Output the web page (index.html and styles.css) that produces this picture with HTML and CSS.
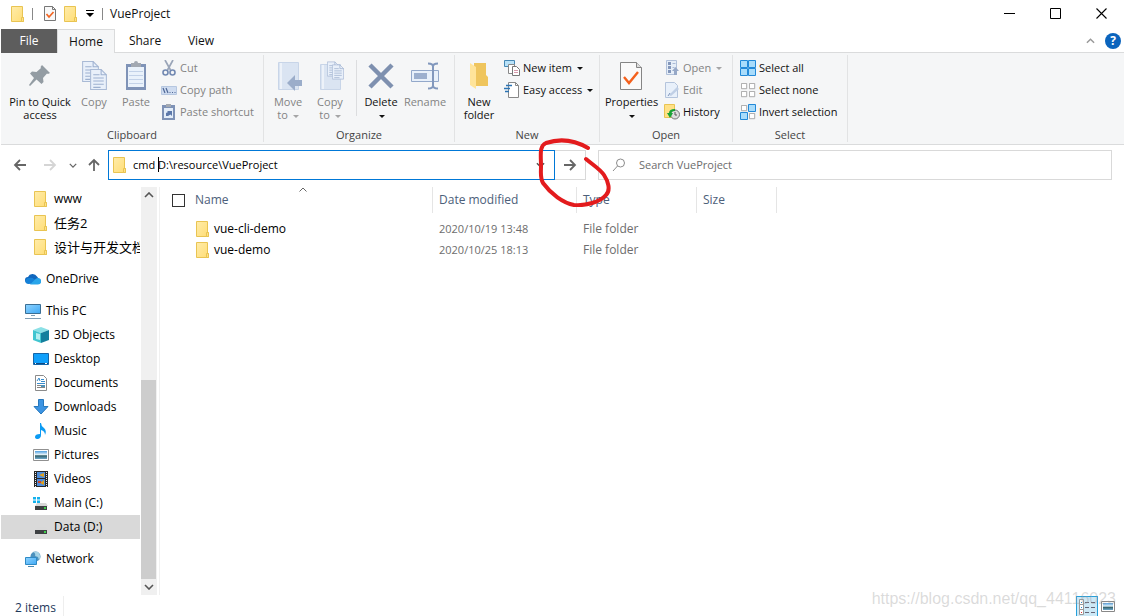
FILE: index.html
```
<!DOCTYPE html>
<html lang="en">
<head>
<meta charset="utf-8">
<title>VueProject</title>
<link rel="stylesheet" href="styles.css">
</head>
<body>
<svg class="defs" aria-hidden="true">
  <defs>
    <linearGradient id="paper" x1="0" y1="0" x2="1" y2="1"><stop offset="0" stop-color="#ffecaa"/><stop offset="1" stop-color="#ffdd75"/></linearGradient>
    <linearGradient id="screen" x1="0" y1="0" x2="1" y2="1"><stop offset="0" stop-color="#8fd3ff"/><stop offset="1" stop-color="#3fa9f5"/></linearGradient>
    <linearGradient id="picture" x1="0" y1="0" x2="0" y2="1"><stop offset="0" stop-color="#4d9ee0"/><stop offset=".45" stop-color="#e4f2f8"/><stop offset=".6" stop-color="#31606a"/><stop offset="1" stop-color="#6fa9cc"/></linearGradient>
  </defs>
  <symbol id="folder" viewBox="0 0 14 16"><path d="M.5.5h11v11h1v4H.5z" fill="url(#paper)" stroke="#e9c452"/><path d="M10.500 15.500v-4h2v4z" fill="#ffe187" stroke="#e9c452"/></symbol>
  <symbol id="chev-down" viewBox="0 0 10 6"><path d="M1 1l4 4 4-4" fill="none" stroke="currentColor" stroke-width="1.6"/></symbol>
  <symbol id="chev-up" viewBox="0 0 10 6"><path d="M1 5l4-4 4 4" fill="none" stroke="currentColor" stroke-width="1.6"/></symbol>
  <symbol id="arrow" viewBox="0 0 14 12"><path d="M1 6h11M7 1l5 5-5 5" fill="none" stroke="currentColor" stroke-width="1.800"/></symbol>
  <symbol id="sheet" viewBox="0 0 16 20"><path d="M.5.5h10l5 5v14H.5z" fill="#e9f0fa" stroke="#a9bad5"/><path d="M10.500.5v5h5M3 5.500h6M3 8.500h10M3 11.500h10M3 14.500h10M3 17.500h7" fill="none" stroke="#9db0cf"/></symbol>
  <symbol id="drive" viewBox="0 0 16 16"><path d="M4 8h9l2 3H2z" fill="#d8d8d8"/><path d="M2 11h12v4H2z" fill="#3e4143"/><path d="M11 13h2" stroke="#3dff4a" stroke-width="1.500"/></symbol>
  <symbol id="cell" viewBox="0 0 8 8"><path d="M.5.5h6v6h-6z" fill="#fff" stroke="#a0a0a0"/></symbol>
  <symbol id="cell-on" viewBox="0 0 8 8"><path d="M.5.5h7v7h-7z" fill="#a9dcfb" stroke="#2389d8"/></symbol>
</svg>

<header class="titlebar">
  <svg class="i-folder"><use href="#folder"/></svg>
  <span class="bar"></span>
  <button class="qa" aria-label="Properties"><svg width="12" height="15" viewBox="0 0 12 15"><path d="M.5.5h8l3 3v11H.5z" fill="#f8f8f8" stroke="#777"/><path d="M8.500.5v3h3" fill="none" stroke="#777"/><path d="M2.500 8l2.500 3 4.500-5" fill="none" stroke="#f26522" stroke-width="1.700"/></svg></button>
  <button class="qa" aria-label="New folder"><svg class="i-folder"><use href="#folder"/></svg></button>
  <button class="qa" aria-label="Customize toolbar"><svg width="8" height="7" viewBox="0 0 8 7"><path d="M0 .5h8" stroke="#000"/><path d="M0 3h8L4 7z"/></svg></button>
  <span class="bar"></span>
  <h1 class="title">VueProject</h1>
  <div class="window-buttons">
    <button aria-label="Minimize"><svg width="11" height="11" viewBox="0 0 11 11"><path d="M0 5.500h11" stroke="#000"/></svg></button>
    <button aria-label="Maximize"><svg width="11" height="11" viewBox="0 0 11 11"><path d="M.5.5h10v10H.5z" fill="none" stroke="#000"/></svg></button>
    <button aria-label="Close"><svg width="11" height="11" viewBox="0 0 11 11"><path d="M.5.5l10 10M10.500.5l-10 10" stroke="#000" stroke-width="1.100"/></svg></button>
  </div>
</header>

<nav class="tabs">
  <button class="tab file">File</button>
  <button class="tab active">Home</button>
  <button class="tab share">Share</button>
  <button class="tab">View</button>
  <div class="tab-tools">
    <button aria-label="Collapse ribbon" class="collapse"><svg width="9" height="6"><use href="#chev-up"/></svg></button>
    <button class="help" aria-label="Help">?</button>
  </div>
</nav>

<section class="ribbon">
  <div class="group clipboard">
    <div class="tools">
      <button class="big w66"><span class="pic"><svg width="24" height="24" viewBox="0 0 24 24"><path d="M14 1l8 8-2 1-1-.5-4 4.500.5 4-2 2-5-4.500L2 22l-1-1 5-7-4-4.500 2-2 4.500.5 4.500-4L12.500 3z" fill="#939ca3"/></svg></span>Pin to Quick<br>access</button>
      <button class="big w42 off"><span class="pic"><svg width="26" height="30" viewBox="0 0 26 30"><use href="#sheet" x="1" y="0" width="17" height="21"/><use href="#sheet" x="9" y="8" width="17" height="21"/></svg></span>Copy</button>
      <button class="big w42 off"><span class="pic"><svg width="20" height="30" viewBox="0 0 20 30"><path d="M0 3h20v26H0z" fill="#7f93b7"/><path d="M2 6h16v20H2z" fill="#eaf2fb"/><path d="M3 10.500h14M3 14.500h14M3 18.500h14M3 22.500h14" stroke="#c3d2e8"/><path d="M5 2h3a2 2 0 0 1 4 0h3v4H5z" fill="#a3a9b2"/></svg></span>Paste</button>
      <div class="stack">
        <button class="small off"><svg class="i16" viewBox="0 0 16 16"><path d="M4 0l5.500 10M12 0L6.500 10" stroke="#9aa5b8" stroke-width="1.700"/><circle cx="4.500" cy="12.500" r="2.500" fill="none" stroke="#7289b2" stroke-width="1.600"/><circle cx="11.500" cy="12.500" r="2.500" fill="none" stroke="#7289b2" stroke-width="1.600"/></svg>Cut</button>
        <button class="small off"><svg class="i16" viewBox="0 0 16 16"><path d="M.5 4.500h15v8H.5z" fill="#cfdcf0" stroke="#b6c7e0"/><path d="M2 6l2 5M5 6l2 5M8.500 10.500h1M11 10.500h1M13.500 10.500h1" stroke="#4e6796" stroke-width="1.200"/></svg>Copy path</button>
        <button class="small off"><svg class="i16" viewBox="0 0 16 16"><path d="M1 1h13v15H1z" fill="#7e92b6"/><path d="M3 4h9v10H3z" fill="#e3edf9"/><path d="M5 0h5v3H5z" fill="#a3a9b2"/><path d="M5 12V9l2-1-1-1h5v5L9.500 10.500 7 12z" fill="#5c78aa"/></svg>Paste shortcut</button>
      </div>
    </div>
    <h2>Clipboard</h2>
  </div>

  <div class="group organize">
    <div class="tools">
      <button class="big w42 off"><span class="pic"><svg width="28" height="30" viewBox="0 0 28 30"><path d="M4.500 1.500h20v27h-20z" fill="#dae4f2" stroke="#c8d5e8"/><path d="M7 2v26" stroke="#edf2f9" stroke-width="2"/><path d="M13 22l8-8v5h7v6h-7v5z" fill="#9badca"/></svg></span>Move<br>to <i class="drop"></i></button>
      <button class="big w42 off"><span class="pic"><svg width="28" height="32" viewBox="0 0 28 32"><path d="M4.500 4.500h20v25h-20z" fill="#dae4f2" stroke="#c8d5e8"/><path d="M7 5v24" stroke="#edf2f9" stroke-width="2"/><use href="#sheet" x="11" y="1" width="12" height="16"/><use href="#sheet" x="16" y="4" width="12" height="16"/></svg></span>Copy<br>to <i class="drop"></i></button>
      <span class="rule"></span>
      <button class="big w42"><span class="pic"><svg width="26" height="26" viewBox="0 0 26 26"><path d="M2 2l22 22M24 2L2 24" stroke="#7e90af" stroke-width="4.500"/></svg></span>Delete<br><i class="drop"></i></button>
      <button class="big w46 off"><span class="pic"><svg width="28" height="28" viewBox="0 0 28 28"><path d="M.5 8.500h27v11H.5z" fill="#e8f0fa" stroke="#93a8ca"/><path d="M3 11h13v6H3z" fill="#9cafce"/><path d="M17 1.500q5 0 5 3 0-3 5-3M17 26.500q5 0 5-3 0 3 5 3M22 4v20" fill="none" stroke="#8298bd" stroke-width="2"/></svg></span>Rename</button>
    </div>
    <h2>Organize</h2>
  </div>

  <div class="group new">
    <div class="tools">
      <button class="big w42"><span class="pic"><svg width="20" height="28" viewBox="0 0 20 28"><path d="M5 1h12v12l2 2v9H5z" fill="#efc55d"/><path d="M1 1l6 4v22l-6-4z" fill="#ffe49a"/></svg></span>New<br>folder</button>
      <div class="stack">
        <button class="small"><svg class="i16" viewBox="0 0 16 16"><path d="M.5.5h10v6H.5z" fill="#b9e2f8" stroke="#4688b5"/><path d="M4.500 4.500h6v9h-6z" fill="#fff" stroke="#888"/><path d="M8.500 6.500h4l3 3v6h-7z" fill="#fff" stroke="#777"/><path d="M10 10.500h4M10 12.500h4" stroke="#d79aab"/></svg>New item <i class="drop"></i></button>
        <button class="small"><svg class="i16" viewBox="0 0 16 16"><path d="M4.500.5h7l3 3v12h-10z" fill="#fff" stroke="#888"/><path d="M11.500.5v3h3" fill="none" stroke="#888"/><path d="M2 3.500h6M0 6.500h6M1 9.500h4" stroke="#2b73b3" stroke-width="1.300"/></svg>Easy access <i class="drop"></i></button>
      </div>
    </div>
    <h2>New</h2>
  </div>

  <div class="group open">
    <div class="tools">
      <button class="big w52"><span class="pic"><svg width="22" height="28" viewBox="0 0 22 28"><path d="M.5.5h16l5 5v22H.5z" fill="#fafafa" stroke="#858585"/><path d="M16.500.5v5h5" fill="#ddd" stroke="#858585"/><path d="M4 15l5 6 9-11" fill="none" stroke="#f4611d" stroke-width="2.400"/></svg></span>Properties<br><i class="drop"></i></button>
      <div class="stack">
        <button class="small off"><svg class="i16" viewBox="0 0 16 16"><path d="M2.500.5h10v14h-10z" fill="#e6eef8" stroke="#b1c1da"/><path d="M4 2h3v3H4zM4 6h3v3H4zM4 10h3v3H4z" fill="#8397bb"/><path d="M8.500 3.500h3M8.500 7.500h2" stroke="#a9bad5"/><path d="M8 11l3.500-4 3.500 4h-2v4h-3v-4z" fill="#96a8c7"/></svg>Open <i class="drop"></i></button>
        <button class="small off"><svg class="i16" viewBox="0 0 16 16"><path d="M1.500.5h9l3 3v12h-12z" fill="#e8f0fa" stroke="#b4c4dc"/><path d="M5 13l8-8 2 2-8 7z" fill="#c0cfe5"/><path d="M4 14l2-3" stroke="#8196bb"/></svg>Edit</button>
        <button class="small"><svg class="i16" viewBox="0 0 16 16"><path d="M.5.5h10v13H.5z" fill="#ffe187" stroke="#e9c452"/><circle cx="11" cy="10.500" r="4.500" fill="#ddd" stroke="#777"/><path d="M11 8v3h2" fill="none" stroke="#555"/><path d="M11 5Q5 5 5 9H3l3 5 3-5H7.500q0-2 3.500-2z" fill="#18a335"/></svg>History</button>
      </div>
    </div>
    <h2>Open</h2>
  </div>

  <div class="group select">
    <div class="tools">
      <div class="stack">
        <button class="small"><svg class="i16" viewBox="0 0 16 16"><use href="#cell-on" width="8" height="8"/><use href="#cell-on" x="8" width="8" height="8"/><use href="#cell-on" y="8" width="8" height="8"/><use href="#cell-on" x="8" y="8" width="8" height="8"/></svg>Select all</button>
        <button class="small"><svg class="i16" viewBox="0 0 16 16"><use href="#cell" x="1" y="1" width="7" height="7"/><use href="#cell" x="9" y="1" width="7" height="7"/><use href="#cell" x="1" y="9" width="7" height="7"/><use href="#cell" x="9" y="9" width="7" height="7"/></svg>Select none</button>
        <button class="small"><svg class="i16" viewBox="0 0 16 16"><use href="#cell" x="1" y="1" width="7" height="7"/><use href="#cell-on" x="8" width="8" height="8"/><use href="#cell-on" y="8" width="8" height="8"/><use href="#cell" x="9" y="9" width="7" height="7"/></svg>Invert selection</button>
      </div>
    </div>
    <h2>Select</h2>
  </div>
</section>

<section class="location">
  <div class="nav-buttons">
    <button aria-label="Back"><svg class="back" width="14" height="12"><use href="#arrow"/></svg></button>
    <button aria-label="Forward" class="faded"><svg width="14" height="12"><use href="#arrow"/></svg></button>
    <button aria-label="Recent locations" class="recent"><svg width="8" height="5"><use href="#chev-down"/></svg></button>
    <button aria-label="Up" class="up"><svg width="14" height="12"><use href="#arrow"/></svg></button>
  </div>
  <div class="address">
    <svg class="i-folder"><use href="#folder"/></svg>
    <input type="text" aria-label="Address" value="cmd D:\resource\VueProject">
    <span class="caret"></span>
    <button aria-label="Previous locations"><svg width="9" height="6"><use href="#chev-down"/></svg></button>
  </div>
  <div class="go-box">
    <button class="go" aria-label="Go"><svg width="14" height="12"><use href="#arrow"/></svg></button>
    <svg class="scribble" viewBox="0 0 76 72" aria-hidden="true"><path d="M50 13C38 6 23 3 8 8 1 11 3 20 3 31c0 8-1 12 2 17 8 11 20 20 31 22 12 1 26-3 32-10 5-5 2-14-2-20-4-6-11-10-18-16" fill="none" stroke="#e31b1d" stroke-width="4" stroke-linecap="round" stroke-linejoin="round"/></svg>
  </div>
  <div class="search">
    <svg width="14" height="14" viewBox="0 0 14 14"><circle cx="8.500" cy="5" r="4" fill="none" stroke="#8c8c8c"/><path d="M5.500 8L1 13" stroke="#8c8c8c"/></svg>
    <input type="text" aria-label="Search" placeholder="Search VueProject">
  </div>
</section>

<main class="content">
  <aside class="tree">
    <ul>
      <li class="child"><svg class="i16"><use href="#folder"/></svg>www</li>
      <li class="child cjk"><svg class="i16"><use href="#folder"/></svg>任务2</li>
      <li class="child cjk"><svg class="i16"><use href="#folder"/></svg>设计与开发文档</li>
    </ul>
    <ul>
      <li><svg class="i16" viewBox="0 0 16 16"><path d="M3 12a3 3 0 0 1 0-6 5 5 0 0 1 9-.5L14 8l-6 5z" fill="#1066bd"/><path d="M3 13a3 3 0 0 1 1-6q3-1 5 1l5 4z" fill="#1481d8"/><path d="M5 13.500l5-5a3.500 3.500 0 0 1 3-1.500 3.200 3.200 0 0 1 0 6.500z" fill="#29a5ea"/></svg>OneDrive</li>
    </ul>
    <ul>
      <li><svg class="i16" viewBox="0 0 16 16"><path d="M.5 1.500h15v9H.5z" fill="url(#screen)" stroke="#3b6f95"/><path d="M6 12.500h4M0 15.500h16" stroke="#7f9db4"/></svg>This PC</li>
      <li class="child"><svg class="i16" viewBox="0 0 16 16"><path d="M0 3l8-3 8 3-8 3z" fill="#8be0e6"/><path d="M0 3l8 3v10l-8-3z" fill="#40c5d0"/><path d="M16 3L8 6v10l8-3z" fill="#137f9d"/><path d="M3 6l4 1v6l-4-1z" fill="#b4eff1"/></svg>3D Objects</li>
      <li class="child"><svg class="i16" viewBox="0 0 16 16"><path d="M.5 2.500h15v11H.5z" fill="#10a0fb" stroke="#1565a8"/><path d="M1 12.500h14" stroke="#0d4a83"/><path d="M2 12.500h1M12 12.500h2" stroke="#fff"/></svg>Desktop</li>
      <li class="child"><svg class="i16" viewBox="0 0 16 16"><path d="M2.500.5h8l3 3v12h-11z" fill="#fff" stroke="#8b8b8b"/><path d="M4 6l2-3 1 3M8 4.500h3M8 6.500h4M4 8.500h8" stroke="#388cce" fill="none"/><path d="M4 10.500h4M4 12.500h8" stroke="#858585"/><path d="M8 10h4v2H8z" fill="#4d92bb"/></svg>Documents</li>
      <li class="child"><svg class="i16" viewBox="0 0 16 16"><path d="M5.500.5h5v7h4.500L8 15 1 7.500h4.500z" fill="#3c94e3" stroke="#2678bd"/></svg>Downloads</li>
      <li class="child"><svg class="i16" viewBox="0 0 16 16"><path d="M7 0h1q0 3 3 5 3 3 1 7 0-4-4-5v5q0 3-3 4-3 0-3-2 0-3 5-3z" fill="#0c9bf3"/></svg>Music</li>
      <li class="child"><svg class="i16" viewBox="0 0 16 16"><path d="M.5 2.500h15v11H.5z" fill="#fff" stroke="#909090"/><path d="M2 4h12v8H2z" fill="url(#picture)"/></svg>Pictures</li>
      <li class="child"><svg class="i16" viewBox="0 0 16 16"><path d="M1 0h14v16H1z" fill="#272727"/><path d="M4 1h8v6H4zM4 8h8v7H4z" fill="#4d8cdb"/><path d="M2.500 1v15M13.500 1v15" stroke="#eee" stroke-dasharray="1 1"/><path d="M6 4l5-2v4zM7 12l4-3v5z" fill="#e1a11b"/><path d="M5 10h3v2H5z" fill="#d34723"/></svg>Videos</li>
      <li class="child"><svg class="i16" viewBox="0 0 16 16"><use href="#drive" width="16" height="16"/><path d="M0 2h3v2.500H0zM4 2h3v2.500H4zM0 5.500h3V8H0zM4 5.500h3V8H4z" fill="#14b1ed"/></svg>Main (C:)</li>
      <li class="child selected"><svg class="i16"><use href="#drive"/></svg>Data (D:)</li>
    </ul>
    <ul>
      <li><svg class="i16" viewBox="0 0 16 16"><circle cx="10.500" cy="5.500" r="5" fill="#4c91bd"/><path d="M8 1q3 1 2 4l3 1 1 3Q17 5 13 1z" fill="#a6d3e5"/><path d="M.5 6.500h11v7H.5z" fill="url(#screen)" stroke="#2e8ac5"/><path d="M3 15.500h6" stroke="#4989b1"/></svg>Network</li>
    </ul>
  </aside>
  <div class="scrollbar" aria-hidden="true">
    <svg width="10" height="6"><use href="#chev-up"/></svg>
    <div class="track"><div class="before"></div><div class="thumb"></div></div>
    <svg width="10" height="6"><use href="#chev-down"/></svg>
  </div>
  <section class="files">
    <svg class="sort" width="8" height="5" viewBox="0 0 8 5"><path d="M.5 4.500L4 1l3.500 3.500" fill="none" stroke="#666"/></svg>
    <table>
      <colgroup><col class="c-name"><col class="c-date"><col class="c-type"><col class="c-size"><col></colgroup>
      <thead>
        <tr><th><label><input type="checkbox">Name</label></th><th>Date modified</th><th>Type</th><th>Size</th><th class="rest"></th></tr>
      </thead>
      <tbody>
        <tr><td><span class="name"><svg class="i-folder"><use href="#folder"/></svg>vue-cli-demo</span></td><td class="date">2020/10/19 13:48</td><td>File folder</td><td></td><td></td></tr>
        <tr><td><span class="name"><svg class="i-folder"><use href="#folder"/></svg>vue-demo</span></td><td class="date">2020/10/25 18:13</td><td>File folder</td><td></td><td></td></tr>
      </tbody>
    </table>
  </section>
</main>

<footer class="status">
  <span class="count">2 items</span>
  <div class="views">
    <button class="on" aria-label="Details view"><svg width="18" height="16" viewBox="0 0 18 16"><path d="M1.500.5h4v5h-4zM1.500 5.500h4v5h-4zM1.500 10.500h4v5h-4z" fill="#fff" stroke="#999"/><path d="M3 3.500h1M3 8.500h1" stroke="#2b8fd0"/><path d="M3 13.500h1" stroke="#d33"/><path d="M7 3.500h4M13 3.500h4M7 8.500h4M13 8.500h4M7 13.500h4M13 13.500h4" stroke="#667"/></svg></button>
    <button aria-label="Thumbnail view"><svg width="14" height="11" viewBox="0 0 14 11"><path d="M.5.5h13v10H.5z" fill="#fff" stroke="#888"/><path d="M2 2h10v7H2z" fill="url(#picture)"/></svg></button>
  </div>
  <span class="watermark">https://blog.csdn.net/qq_44116023</span>
</footer>
</body>
</html>
```
FILE: styles.css
```
* { box-sizing: border-box; }
body {
  margin: 0;
  padding: 0 1px;
  min-height: 100vh;
  display: flex;
  flex-direction: column;
  overflow: hidden;
  background: #fff;
  color: #111;
  font: 12px/16px "Open Sans", "Noto Sans CJK SC", sans-serif;
}
button, input { font: inherit; color: inherit; }
button { border: 0; padding: 0; background: none; }
h1, h2, ul { margin: 0; padding: 0; font: inherit; list-style: none; }
svg { flex: none; display: block; }
.defs { position: absolute; width: 0; height: 0; }
.i16 { width: 16px; height: 16px; }
.i-folder { width: 14px; height: 16px; }

.titlebar { display: flex; align-items: center; height: 27px; margin-bottom: 1px; padding-left: 10px; }
.bar { width: 1px; height: 12px; margin: 0 11px 0 7px; background: #888; }
.qa { margin-right: 8px; }
.qa + .bar { margin: 0 7px 0 0; }
.window-buttons { display: flex; margin-left: auto; }
.window-buttons button { width: 46px; height: 26px; display: grid; place-items: center; }

.tabs { display: flex; height: 25px; border-bottom: 1px solid #dadbdc; padding-top: 1px; }
.tab { width: 52px; height: 24px; }
.tab.file { width: 56px; background: #5d5d5d; color: #fff; }
.tab.active { width: 58px; background: #f5f6f7; border: 1px solid #dadbdc; border-bottom: 0; height: 25px; }
.tab.share { width: 60px; }
.tab-tools { display: flex; align-items: center; gap: 10px; margin-left: auto; padding-right: 3px; }
.collapse { color: #999; }
.help { width: 16px; height: 16px; border-radius: 50%; background: #0b64bd; color: #fff; font-weight: 700; line-height: 16px; }

.ribbon { display: flex; height: 92px; background: #f5f6f7; border-bottom: 1px solid #dadbdc; padding: 2px 0; font-size: 11px; }
.group { display: flex; flex-direction: column; border-right: 1px solid #e2e3e4; padding-top: 2px; flex: none; }
.group h2 { margin-top: auto; text-align: center; color: #444; line-height: 14px; }
.tools { display: flex; height: 66px; padding-left: 3px; }
.clipboard { width: 263px; }
.clipboard .tools { padding-left: 6px; }
.organize { width: 191px; }
.new { width: 145px; }
.open { width: 133px; }
.open .tools { padding-left: 5px; }
.select { width: 115px; }
.big { display: block; align-self: flex-start; flex: none; line-height: 13px; white-space: nowrap; }
.pic { display: grid; place-items: center; height: 38px; }
.w42 { width: 42px; }
.w46 { width: 46px; }
.w52 { width: 52px; }
.w66 { width: 66px; }
.off { color: #838383; }
.stack { padding-left: 4px; }
.open .stack { padding-left: 7px; }
.small { display: flex; align-items: center; gap: 3px; height: 22px; white-space: nowrap; }
.rule { width: 1px; height: 56px; margin: 3px 3px 0 5px; background: #dcdddf; }
.drop { display: inline-block; border: 3px solid transparent; border-top-color: currentColor; border-bottom: 0; vertical-align: middle; margin-left: 2px; }
.off .drop { opacity: .7; }

.location { display: grid; grid-template-columns: 107px 447fr 31px 526fr; align-items: center; height: 40px; margin-bottom: 2px; padding-right: 12px; }
.nav-buttons { display: flex; align-items: center; padding-left: 12px; color: #666; }
.nav-buttons button { width: 30px; height: 20px; display: grid; place-items: center; }
.nav-buttons button:first-child { width: 14px; margin-right: 8px; }
.nav-buttons .recent { width: 16px; }
.nav-buttons .up { width: 26px; }
.back { transform: rotate(180deg); }
.up svg { transform: rotate(-90deg); }
.nav-buttons .faded { color: #d5d5d5; }
.address { position: relative; display: flex; align-items: center; height: 30px; border: 1px solid #0078d7; padding: 0 9px 0 4px; color: #000; }
.address input, .search input { flex: 1; min-width: 0; border: 0; outline: 0; background: none; padding: 0; font-size: 11px; }
.address input { margin-left: 6px; }
.address button { color: #555; }
.caret { position: absolute; left: 49px; top: 6px; width: 1px; height: 15px; background: #000; }
.go-box { position: relative; }
.go { width: 31px; height: 30px; display: grid; place-items: center; border: 1px solid #d9d9d9; border-left: 0; color: #666; }
.scribble { position: absolute; z-index: 2; left: -17px; top: -15px; width: 76px; height: 72px; pointer-events: none; }
.search { display: flex; align-items: center; gap: 13px; height: 30px; margin-left: 12px; padding-left: 13px; border: 1px solid #d9d9d9; }
.search input::placeholder { color: #6d6d6d; opacity: 1; }

.content { flex: 1; display: flex; }
.tree { width: 139px; overflow: hidden; color: #000; }
.tree ul + ul { margin-top: 8px; }
.tree li { display: flex; align-items: center; gap: 5px; height: 24px; padding-left: 24px; white-space: nowrap; }
.tree .child { padding-left: 32px; }
.tree .cjk { font-size: 13px; line-height: 14px; }
.tree .selected { background: #d9d9d9; }
.scrollbar { display: flex; flex-direction: column; align-items: center; justify-content: space-between; width: 16px; margin-left: 1px; padding: 5px 0; background: #f0f0f0; color: #555; }
.track { flex: 1; width: 100%; display: flex; flex-direction: column; margin: 5px 0; }
.before { flex: 177; }
.thumb { flex: 199; width: 15px; background: #cdcdcd; }
.files { position: relative; flex: 1; margin-left: 2px; border-left: 1px solid #f0f0f0; }
.sort { position: absolute; left: 139px; top: 0; }
table { width: 100%; table-layout: fixed; border-collapse: separate; border-spacing: 0; color: #6d6d6d; }
.c-name { width: 273px; }
.c-date { width: 144px; }
.c-type { width: 120px; }
.c-size { width: 80px; }
th, td { padding: 0 6px; text-align: left; white-space: nowrap; }
th { height: 26px; font-weight: 400; color: #4c607a; border-right: 1px solid #e5e5e5; }
th.rest { border: 0; }
th label { display: flex; align-items: center; gap: 10px; padding-left: 6px; }
th input { appearance: none; width: 13px; height: 13px; margin: 0; border: 1px solid #333; background: #fff; }
tbody::before { content: ""; display: block; height: 5px; }
td { height: 21px; }
.date { font-size: 11px; }
.name { display: flex; align-items: center; gap: 4px; padding-left: 30px; color: #000; }

.status { position: relative; display: flex; justify-content: space-between; height: 21px; padding: 1px 9px 0 14px; }
.count { color: #1e395b; padding: 4px 7px 0 0; line-height: 16px; border-right: 1px solid #eee; }
.views { display: flex; gap: 3px; }
.views button { display: grid; place-items: center; }
.views .on { width: 22px; height: 20px; background: #cce8f6; border: 1px solid #26a0da; border-bottom: 0; }
.watermark { position: absolute; right: 8px; top: -6px; font: 16px/20px "Liberation Sans", sans-serif; color: rgba(150, 150, 150, .35); pointer-events: none; }
```
